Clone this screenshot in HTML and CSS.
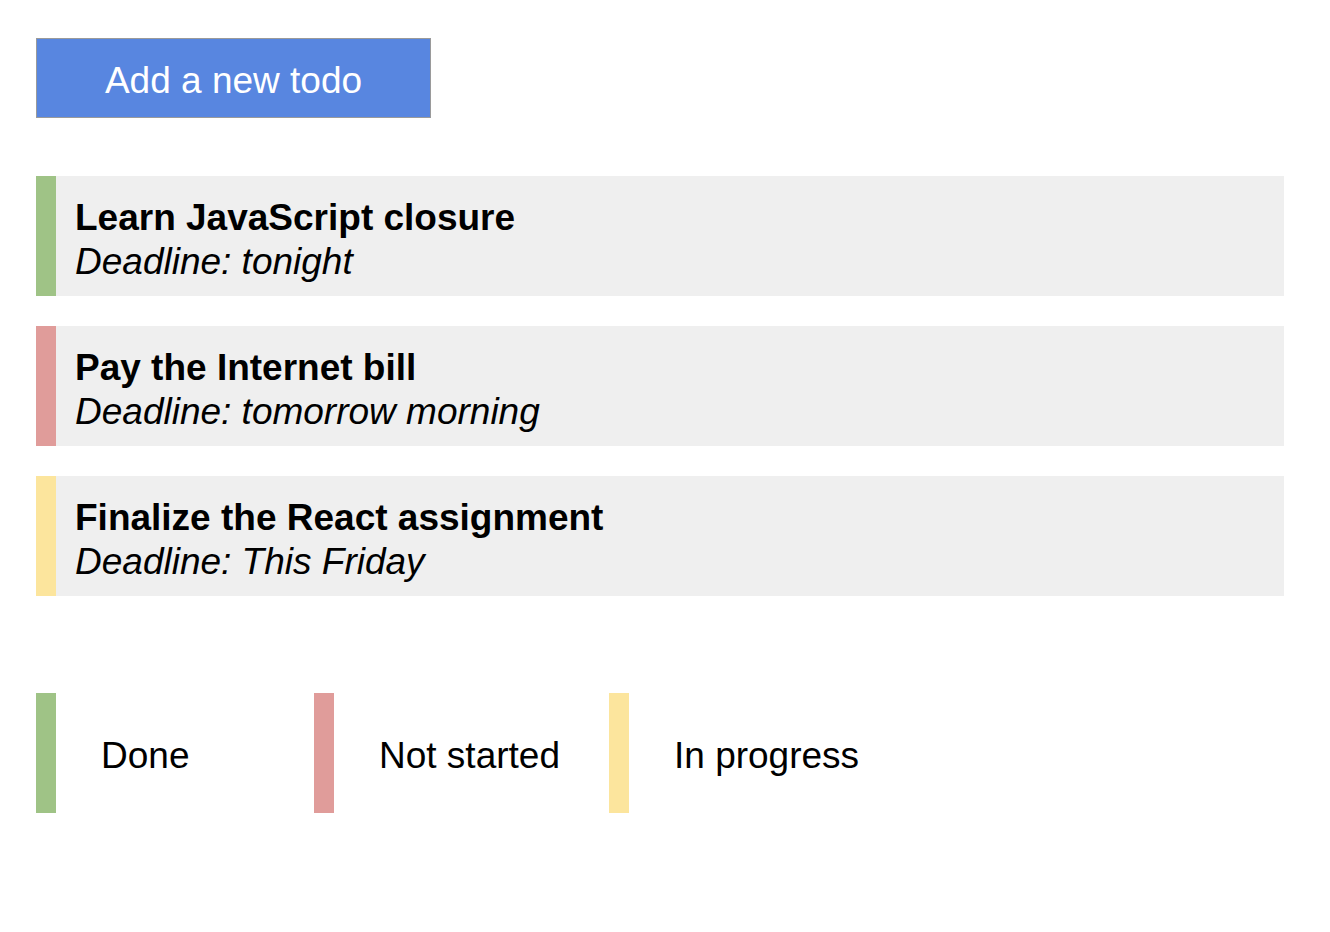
FILE: index.html
```html
<!DOCTYPE html>
<html>
<head>
<meta charset="utf-8">
<link rel="stylesheet" href="styles.css">
</head>
<body>
<div class="page">
  <button class="add-btn">Add a new todo</button>
  <div class="todo-list">
    <div class="todo todo-done">
      <div class="todo-title">Learn JavaScript closure</div>
      <div class="todo-deadline">Deadline: tonight</div>
    </div>
    <div class="todo todo-not-started">
      <div class="todo-title">Pay the Internet bill</div>
      <div class="todo-deadline">Deadline: tomorrow morning</div>
    </div>
    <div class="todo todo-progress">
      <div class="todo-title">Finalize the React assignment</div>
      <div class="todo-deadline">Deadline: This Friday</div>
    </div>
  </div>
  <div class="legend">
    <div class="legend-item legend-done"><span class="legend-label">Done</span></div>
    <div class="legend-item legend-not-started"><span class="legend-label">Not started</span></div>
    <div class="legend-item legend-progress"><span class="legend-label">In progress</span></div>
  </div>
</div>
</body>
</html>
```
FILE: styles.css
```css
html, body {
  margin: 0;
  padding: 0;
  background: #ffffff;
}
body {
  font-family: "Liberation Sans", Arial, sans-serif;
  color: #000;
}
.page {
  padding: 38px 46px 0 36px;
  display: flex;
  flex-direction: column;
  align-items: flex-start;
}
.add-btn {
  box-sizing: border-box;
  width: 395px;
  height: 80px;
  background: #5886e0;
  border: 1px solid #9a9a9a;
  color: #ffffff;
  font-family: "Liberation Sans", Arial, sans-serif;
  font-size: 37px;
  padding: 6px 0 0 0;
  margin: 0;
  cursor: pointer;
}
.todo-list {
  margin-top: 58px;
  align-self: stretch;
  display: flex;
  flex-direction: column;
  gap: 30px;
}
.todo {
  height: 120px;
  box-sizing: border-box;
  background: #efefef;
  border-left: 20px solid #9fc386;
  padding: 20px 0 0 19px;
  font-size: 37px;
  line-height: 43.5px;
}
.todo-done { border-left-color: #9fc386; }
.todo-not-started { border-left-color: #e09c9a; }
.todo-progress { border-left-color: #fce59d; }
.todo-title {
  font-weight: bold;
}
.todo-deadline {
  font-style: italic;
}
.legend {
  margin-top: 97px;
  display: grid;
  grid-template-columns: 278px 295px auto;
}
.legend-item {
  box-sizing: border-box;
  height: 120px;
  display: flex;
  align-items: center;
  border-left: 20px solid #9fc386;
  padding: 6px 0 0 45px;
  font-size: 37px;
}
.legend-done { border-left-color: #9fc386; }
.legend-not-started { border-left-color: #e09c9a; }
.legend-progress { border-left-color: #fce59d; }
```
